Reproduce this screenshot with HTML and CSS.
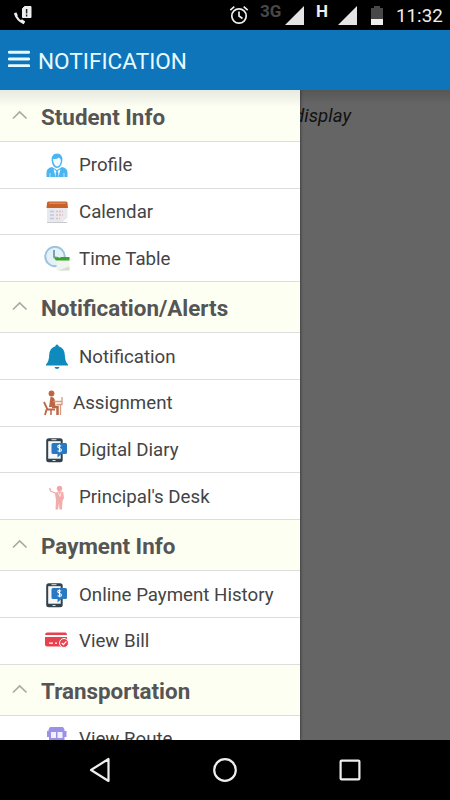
FILE: index.html
```html
<!DOCTYPE html>
<html lang="en">
<head>
<meta charset="utf-8">
<title>Notification</title>
<link rel="stylesheet" href="styles.css">
</head>
<body>
<svg class="defs" width="0" height="0">
  <defs>
    <symbol id="up" viewBox="0 0 16 10"><path d="M1 8.5 7.7 2l6.8 6.5" fill="none" stroke="#aaaaa4" stroke-width="1.7"/></symbol>
    <symbol id="phone" viewBox="0 0 26 26">
      <rect x="2.200" y="1.200" width="16.500" height="24" rx="2.500" fill="#34424c"/>
      <rect x="4.200" y="4.200" width="12.500" height="17.500" fill="#f4f8fa"/>
      <path d="M7.500 2.700h5M8.500 23.500h3" stroke="#dce3e7" stroke-width="1"/>
      <path d="M9 6h12.500q1.500 0 1.500 1.500v8q0 1.500-1.500 1.500h-4l-4 3.500V17H9q-1.500 0-1.500-1.500v-8Q7.500 6 9 6z" fill="#2878c2"/>
      <path d="M17.200 9q-3.500-1.400-3.500.6 0 1.100 1.700 1.600 2 .6 2 1.800 0 2-3.800.8M15.500 7.500v7.700" fill="none" stroke="#fff" stroke-width="1.100"/>
    </symbol>
  </defs>
</svg>
<div class="screen">
  <header class="status">
    <svg class="call" width="20" height="20" viewBox="0 0 20 20"><path d="M2.300 8Q4 14 11 17.300" fill="none" stroke="#eee" stroke-width="2.200"/><path d="M1 7l2.500-.5 1.300 3L2.500 11zM7.500 14.500l1.500-1.300 3.200 2.300-1.500 2.800z" fill="#eee"/><path d="M11.500 .5H18v11H9.500V2.500z" fill="#eee" stroke="#eee" stroke-linejoin="round"/><path d="M13.600 3v4.500M13.600 8.500v2" stroke="#222" stroke-width="1.500"/></svg>
    <svg class="alarm" width="20" height="20" viewBox="0 0 20 20"><circle cx="10" cy="11" r="7.200" fill="none" stroke="#eee" stroke-width="1.700"/><path d="M10 6.500V11l3.500 2.500M1.300 5.200l4-3.500M18.700 5.200l-4-3.500" fill="none" stroke="#eee" stroke-width="1.700"/></svg>
    <span class="net dim">3G</span>
    <svg class="sig1" width="19" height="19" viewBox="0 0 19 19"><path d="M0 19 19 0v19z" fill="#e4e4e4"/></svg>
    <span class="net hspa">H</span>
    <svg class="sig2" width="19" height="19" viewBox="0 0 19 19"><path d="M0 19 19 0v19z" fill="#e4e4e4"/></svg>
    <svg class="battery" width="12" height="19" viewBox="0 0 12 19"><path d="M0 2h3V0h6v2h3v17H0z" fill="#484848"/><path d="M0 13h12v6H0z" fill="#eee"/></svg>
    <span class="time">11:32</span>
  </header>
  <div class="bar">
    <svg width="22" height="18" viewBox="0 0 22 18"><path d="M1.300 2.200h19.400M1.300 9h19.400M1.300 15.600h19.400" stroke="#e6fbff" stroke-width="2.900" stroke-linecap="round"/></svg>
    <h1>NOTIFICATION</h1>
  </div>
  <main>
    <nav class="drawer">
      <h2><svg class="chev"><use href="#up"/></svg>Student Info</h2>
      <a><svg class="ico" viewBox="0 0 26 26"><path d="M2.500 25v-4.500q0-4.500 5.500-5.500l5 3 5-3q5.500 1 5.500 5.500V25z" fill="#4bb5f1"/><path d="M13 1.500q6 0 5.300 7.500Q17.500 15.500 13 16 8.500 15.500 7.700 9 7 1.500 13 1.500z" fill="#4bb5f1"/><path d="M9 7q4 .5 6-1.500L17 8q-.5 6-4 6.500Q9.500 14 9 7zM9.500 17l3.500 2.500 3.500-2.500-2 8h-3z" fill="#f1fbff"/><path d="M12 19.300h2l.6 5.700h-3.200z" fill="#4bb5f1"/><path d="M6 21v4M20 21v4" stroke="#b8e5ff"/></svg>Profile</a>
      <a><svg class="ico" viewBox="0 0 26 26"><path d="M3 8h20.500v15.500H3z" fill="#e9e9ed"/><path d="M3 4q0-1.500 1.500-1.500H22q1.500 0 1.500 1.500l.5 5H2.500z" fill="#c76129"/><path d="M5 4.200h17" stroke="#e49b67"/><path d="M6 12.500h4M6 16h4M6 19.500h4" stroke="#bac7e3" stroke-width="1.500"/><path d="M12 12.500h7M12 16h7M12 19.500h4" stroke="#e4bcc2" stroke-width="1.500" stroke-dasharray="2 1"/><path d="M18 23.500l5.500-5v5z" fill="#fff"/><path d="M3 23.500h20" stroke="#cacace"/></svg>Calendar</a>
      <a><svg class="ico" viewBox="0 0 26 26"><circle cx="11" cy="10.500" r="9.700" fill="#e4f1f8" stroke="#9cc3df" stroke-width="2"/><path d="M10 4v7l5 1" fill="none" stroke="#6f94aa" stroke-width="1.700"/><path d="M12.500 12h13v12.500h-13z" fill="#f1f5ef"/><path d="M10 12h5l2-1h8.500V14.500H12z" fill="#38a52e"/><path d="M14 24.500h11.500v-4z" fill="#d5ddd3"/></svg>Time Table</a>
      <h2><svg class="chev"><use href="#up"/></svg>Notification/Alerts</h2>
      <a><svg class="ico" viewBox="0 0 26 26"><path d="M13 .500q1.600 0 1.600 1.800Q20.500 4 20.800 11q.2 6.500 3.200 9.500v1H2v-1q3-3 3.200-9.500Q5.500 4 11.400 2.300 11.400.500 13 .500zM10.500 23h5q-.5 2-2.500 2t-2.500-2z" fill="#0e8abd"/></svg>Notification</a>
      <a class="near"><svg class="ico" viewBox="0 0 26 26"><g fill="none" stroke="#bc6646"><circle cx="10.500" cy="3.500" r="2.900" fill="#bc6646" stroke="none"/><path d="M9.500 7q4-.5 4.500 4l.5 6H8z" fill="#bc6646" stroke="none"/><path d="M3 12l3.500 7.500H14M5.500 19.500 4 25" stroke-width="1.800"/><path d="M11 17h5.500v8" stroke-width="2.500"/><path d="M10 19v6" stroke-width="1.500"/><path d="M12.500 11.500h8M15.500 14.500H21.500M21 7v8M19.500 15v10" stroke="#d69a82" stroke-width="1.300"/></g></svg>Assignment</a>
      <a><svg class="ico"><use href="#phone"/></svg>Digital Diary</a>
      <a><svg class="ico" viewBox="0 0 26 26"><circle cx="15.500" cy="4.500" r="2.700" fill="#efa7a7"/><path d="M6 3.500l1.500 3.500L12 8.500l3-1.500 4.200 1 .8 6-1.500 3-.5 8.500h-2.500l-.5-6-1 6h-2.500l.5-9-1-7-5-2L5 4.500z" fill="#f3acac"/><path d="M14 8.500l2 4 1-4" fill="none" stroke="#fde4e2"/></svg>Principal's Desk</a>
      <h2><svg class="chev"><use href="#up"/></svg>Payment Info</h2>
      <a><svg class="ico"><use href="#phone"/></svg>Online Payment History</a>
      <a><svg class="ico" viewBox="0 0 26 26"><path d="M3 4.500h18.500q1.500 0 1.500 2.500H1Q1 4.500 3 4.500zM1 9h22v7q0 2.500-2 2.500H3q-2 0-2-2z" fill="#e9404d"/><path d="M5 15.200h4M11 15.200h2" stroke="#fff" stroke-width="1.200"/><circle cx="20" cy="15" r="4.500" fill="#e9404d" stroke="#fff"/><path d="M17.800 15l1.600 1.600 3-3.200" fill="none" stroke="#fff" stroke-width="1.200"/></svg>View Bill</a>
      <h2><svg class="chev"><use href="#up"/></svg>Transportation</h2>
      <a><svg class="ico" viewBox="0 0 26 26"><path d="M6 1h13l1.500 2.500V5h2v6h-2v14H5V11H3V5h1.500V3.500z" fill="#9a92e9"/><path d="M7 6h5v6H7zM13.500 6h5v6h-5z" fill="#f2f0ff"/></svg>View Route</a>
    </nav>
    <div class="page"><p>No Data to display</p></div>
  </main>
  <footer>
    <svg width="22" height="26" viewBox="0 0 22 26"><path d="M19.500 2v22L2 13z" fill="none" stroke="#eee" stroke-width="2.200" stroke-linejoin="round"/></svg>
    <svg width="26" height="26" viewBox="0 0 26 26"><circle cx="13" cy="13" r="10.800" fill="none" stroke="#eee" stroke-width="2.200"/></svg>
    <svg width="22" height="22" viewBox="0 0 22 22"><rect x="1.600" y="1.600" width="18.800" height="18.800" rx="1" fill="none" stroke="#eee" stroke-width="2.200"/></svg>
  </footer>
</div>
</body>
</html>
```
FILE: styles.css
```css
* { box-sizing: border-box; }
body { margin: 0; font-family: Roboto, "Liberation Sans", sans-serif; background: #000; }
.defs { display: block; height: 0; }
.screen { width: 450px; height: 800px; display: flex; flex-direction: column; overflow: hidden; }
.status { height: 30px; flex: none; display: flex; align-items: flex-start; color: #eee; }
.status svg { flex: none; }
.call { margin: 6px 0 0 13px; }
.alarm { margin: 5px 0 0 196px; }
.net { font-weight: 700; font-size: 17px; line-height: 20px; margin-top: 1px; }
.dim { color: #484848; margin-left: 11px; width: 25px; }
.sig1 { margin-top: 6px; }
.hspa { margin-left: 12px; width: 22px; }
.sig2 { margin-top: 6px; }
.battery { margin: 6px 0 0 14px; }
.time { font-size: 18.8px; line-height: 22px; margin: 5px 0 0 13px; white-space: nowrap; }
.bar { height: 60px; flex: none; display: flex; align-items: center; background: #0f75ba; color: #e6fbff; padding-left: 8px; }
.bar svg { margin-top: -2px; }
.bar h1 { margin: 4px 0 0 8px; font-size: 22.6px; font-weight: 400; line-height: 30px; }
main { height: 650px; flex: none; display: flex; overflow: hidden; background: linear-gradient(#565656, #656565 14px); }
.drawer { width: 300px; height: 650px; flex: none; overflow: hidden; background: #fff; box-shadow: 0 0 3px #222; z-index: 1; }
.drawer h2 { height: 51.3px; margin: 0; display: flex; align-items: center; padding: 2px 0 0 12px; font-size: 22.4px; font-weight: 700; color: #555; background: #fefff3; border-bottom: 1px solid #ddd; }
.drawer h2:first-child { height: 52px; background: linear-gradient(#e7e8df, #fefff3 17px); }
.chev { width: 16px; height: 10px; margin: -4px 13px 0 0; }
.drawer a { height: 46.7px; display: flex; align-items: center; padding: 1px 0 0 44px; gap: 9px; font-size: 18.7px; color: #444; border-bottom: 1px solid #ddd; white-space: nowrap; }
.ico { width: 26px; height: 26px; flex: none; }
.drawer a.near { padding-left: 41px; gap: 6px; }
.page { flex: 1; }
.page p { width: 180px; margin: 15px 0 0 -99px; text-align: right; white-space: nowrap; font-size: 18.7px; line-height: 23px; font-style: italic; color: #111; padding-right: 30px; }
footer { height: 60px; flex: none; background: #000; display: flex; align-items: center; padding-left: 89px; }
footer svg + svg { margin-left: 101px; }
```
